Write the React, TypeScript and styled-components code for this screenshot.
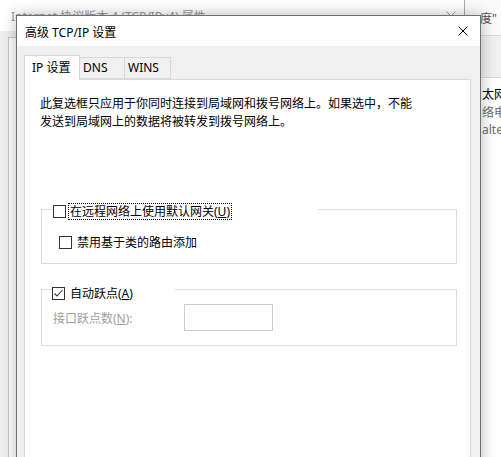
import React from 'react';
import styled, { createGlobalStyle } from 'styled-components';

const GlobalStyle = createGlobalStyle`
  html, body {
    margin: 0;
    padding: 0;
    background: #f0f0f0;
  }
  body {
    font-family: "Noto Sans", "Noto Sans CJK SC", sans-serif;
    font-size: 12px;
    color: #000;
  }
`;

const Desktop = styled.div`
  position: relative;
  width: 501px;
  height: 457px;
  overflow: hidden;
  background: #f0f0f0;
`;

/* ---------- windows behind the dialog ---------- */

const BackWindow = styled.div`
  position: absolute;
  left: -1px;
  top: -1px;
  width: 464px;
  height: 470px;
  border: 1px solid #aaaaaa;
  background: #f0f0f0;
  display: flex;
  flex-direction: column;
`;

const BackTitleBar = styled.div`
  height: 31px;
  background: #ffffff;
  display: flex;
  align-items: center;
  justify-content: space-between;
  padding: 0 8px 0 11px;
  color: #999999;
`;

const BackTitle = styled.span`
  font-family: "Noto Sans", "Noto Sans CJK SC", sans-serif;
  font-size: 12px;
  margin-top: 1px;
`;

const BackBody = styled.div`
  flex: 1;
  padding: 6px 0 0 8px;
  display: flex;
`;

const BackPanel = styled.div`
  flex: 1;
  background: #ffffff;
  border: 1px solid #c8c8c8;
`;

const SideWindow = styled.div`
  position: absolute;
  left: 463px;
  top: -1px;
  width: 60px;
  height: 470px;
  background: #f0f0f0;
  border-left: 1px solid #9a9a9a;
  display: flex;
  flex-direction: column;
`;

const SideHeader = styled.div`
  box-sizing: border-box;
  height: 37px;
  background: #fafafa;
  border-bottom: 1px solid #dadada;
  display: flex;
  align-items: flex-end;
  padding: 0 0 8px 16px;
  color: #555;
`;

const SidePanel = styled.div`
  margin-top: 41px;
  margin-left: 16px;
  flex: 1;
  background: #ffffff;
  border-top: 1px solid #d9d9d9;
  padding: 8px 0 0 2px;
  display: flex;
  flex-direction: column;
`;

const SideLine = styled.div<{ $muted?: boolean }>`
  height: 17.5px;
  line-height: 17.5px;
  white-space: nowrap;
  color: ${p => (p.$muted ? '#6d6d6d' : '#000')};
`;

/* ---------- the dialog ---------- */

const Dialog = styled.div`
  position: absolute;
  left: 16px;
  top: 15px;
  width: 463px;
  height: 470px;
  border: 1px solid #6f6f6f;
  background: #f0f0f0;
  box-shadow: 0 0 14px rgba(0, 0, 0, 0.28);
  display: flex;
  flex-direction: column;
`;

const TitleBar = styled.div`
  height: 30px;
  background: #ffffff;
  display: flex;
  align-items: center;
  justify-content: space-between;
  padding-left: 8px;
`;

const Title = styled.span`
  font-size: 12px;
  margin-top: 1px;
`;

const CloseButton = styled.div`
  width: 34px;
  height: 30px;
  display: flex;
  align-items: center;
  justify-content: center;
`;

const Body = styled.div`
  flex: 1;
  padding: 9px 9px 0 7px;
  display: flex;
  flex-direction: column;
`;

const TabRow = styled.div`
  display: flex;
  align-items: flex-end;
  height: 24px;
  position: relative;
  z-index: 1;
`;

const Tab = styled.div<{ $active?: boolean; $width: number; $first?: boolean }>`
  box-sizing: border-box;
  width: ${p => p.$width}px;
  height: ${p => (p.$active ? 25 : 22)}px;
  margin-bottom: ${p => (p.$active ? -1 : 0)}px;
  background: ${p => (p.$active ? '#ffffff' : '#f0f0f0')};
  border: 1px solid #d9d9d9;
  border-bottom: ${p => (p.$active ? 'none' : '1px solid #d9d9d9')};
  border-left: ${p => (p.$first ? '1px solid #d9d9d9' : 'none')};
  padding-left: ${p => (p.$active ? 7 : 3)}px;
  padding-top: ${p => (p.$active ? 3 : 1)}px;
  line-height: 17px;
  white-space: nowrap;
`;

const TabPage = styled.div`
  flex: 1;
  background: #ffffff;
  border: 1px solid #d9d9d9;
  display: flex;
  flex-direction: column;
  padding: 0 13px 0 16px;
`;

const Note = styled.p`
  margin: 15px 0 0 -1px;
  line-height: 18px;
`;

const GroupBox = styled.div<{ $top: number }>`
  margin-top: ${p => p.$top}px;
  border: 1px solid #dcdcdc;
  display: flex;
  flex-direction: column;
`;

const GroupHeader = styled.div<{ $width: number; $lift: number; $indent: number }>`
  margin-top: -${p => p.$lift}px;
  margin-left: 10px;
  width: ${p => p.$width}px;
  height: 17px;
  padding-left: ${p => p.$indent}px;
  background: #ffffff;
  display: flex;
  align-items: center;
`;

const Row = styled.div<{ $top: number; $left: number; $bottom: number }>`
  display: flex;
  align-items: center;
  margin: ${p => p.$top}px 0 ${p => p.$bottom}px ${p => p.$left}px;
`;

const Box = styled.span`
  box-sizing: border-box;
  width: 13px;
  height: 13px;
  border: 1px solid #333333;
  background: #ffffff;
  display: inline-flex;
  align-items: center;
  justify-content: center;
  flex-shrink: 0;
`;

const Label = styled.span<{ $focused?: boolean; $gap: number }>`
  margin-left: ${p => p.$gap}px;
  height: 15px;
  line-height: 15px;
  padding: 0 1px;
  border: 1px dotted ${p => (p.$focused ? '#000' : 'transparent')};
  white-space: nowrap;
`;

const FieldLabel = styled.span`
  width: 131px;
  color: #a0a0a0;
  white-space: nowrap;
`;

const MetricInput = styled.div`
  box-sizing: border-box;
  width: 89px;
  height: 27px;
  border: 1px solid #cccccc;
  background: #ffffff;
`;

const Check: React.FC<{ checked?: boolean }> = ({ checked }) => (
  <Box>
    {checked && (
      <svg width="11" height="11" viewBox="0 0 11 11">
        <polyline points="1.5,5.5 4,8 9.5,2" fill="none" stroke="#333" strokeWidth="1.1" />
      </svg>
    )}
  </Box>
);

const CrossIcon: React.FC<{ color: string; size: number }> = ({ color, size }) => (
  <svg width={size} height={size} viewBox={`0 0 ${size} ${size}`}>
    <path d={`M0.5 0.5 L${size - 0.5} ${size - 0.5} M${size - 0.5} 0.5 L0.5 ${size - 0.5}`} stroke={color} strokeWidth="1" />
  </svg>
);

const App: React.FC = () => (
  <>
    <GlobalStyle />
    <Desktop>
      <SideWindow>
        <SideHeader>度"</SideHeader>
        <SidePanel>
          <SideLine>太网</SideLine>
          <SideLine $muted>络电</SideLine>
          <SideLine $muted>alte</SideLine>
        </SidePanel>
      </SideWindow>

      <BackWindow>
        <BackTitleBar>
          <BackTitle>Internet 协议版本 4 (TCP/IPv4) 属性</BackTitle>
          <CrossIcon color="#999" size={10} />
        </BackTitleBar>
        <BackBody>
          <BackPanel />
        </BackBody>
      </BackWindow>

      <Dialog>
        <TitleBar>
          <Title>高级 TCP/IP 设置</Title>
          <CloseButton>
            <CrossIcon color="#000" size={10} />
          </CloseButton>
        </TitleBar>
        <Body>
          <TabRow>
            <Tab $active $first $width={56}>IP 设置</Tab>
            <Tab $width={45}>DNS</Tab>
            <Tab $width={46}>WINS</Tab>
          </TabRow>
          <TabPage>
            <Note>
              此复选框只应用于你同时连接到局域网和拨号网络上。如果选中，不能
              <br />
              发送到局域网上的数据将被转发到拨号网络上。
            </Note>

            <GroupBox $top={78}>
              <GroupHeader $width={265} $lift={7} $indent={1}>
                <Check />
                <Label $focused $gap={2}>
                  在远程网络上使用默认网关(<u>U</u>)
                </Label>
              </GroupHeader>
              <Row $top={14} $left={17} $bottom={12}>
                <Check />
                <Label $gap={3}>禁用基于类的路由添加</Label>
              </Row>
            </GroupBox>

            <GroupBox $top={25}>
              <GroupHeader $width={123} $lift={5} $indent={0}>
                <Check checked />
                <Label $gap={3}>
                  自动跃点(<u>A</u>)
                </Label>
              </GroupHeader>
              <Row $top={2} $left={11} $bottom={14}>
                <FieldLabel>
                  接口跃点数(<u>N</u>):
                </FieldLabel>
                <MetricInput />
              </Row>
            </GroupBox>
          </TabPage>
        </Body>
      </Dialog>
    </Desktop>
  </>
);

export default App;
